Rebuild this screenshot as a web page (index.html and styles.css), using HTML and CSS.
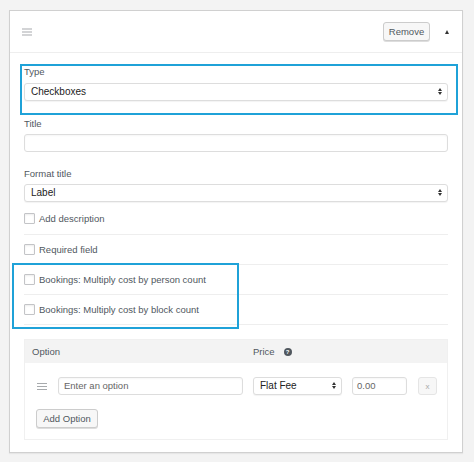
FILE: index.html
```html
<!DOCTYPE html>
<html lang="en">
  <head>
    <meta charset="UTF-8" />
    <meta name="viewport" content="width=device-width, initial-scale=1.0" />
    <title>Add-on Field</title>
    <link rel="stylesheet" href="styles.css">
  </head>
  <body>
    <div class="panel">
      <div class="panel-header">
        <span class="handle">
          <svg width="10" height="8" viewBox="0 0 10 8"><path d="M0 1h10M0 4h10M0 7h10" stroke="#a7aaad" stroke-width="1.2"/></svg>
        </span>
        <div class="header-actions">
          <button class="btn remove">Remove</button>
          <span class="toggle"></span>
        </div>
      </div>

      <div class="panel-body">
        <div class="field highlight-wide">
          <label>Type</label>
          <div class="select">Checkboxes<span class="arrows"></span></div>
        </div>

        <div class="field title-field">
          <label>Title</label>
          <div class="text-input"></div>
        </div>

        <div class="field format-field">
          <label>Format title</label>
          <div class="select">Label<span class="arrows"></span></div>
        </div>

        <div class="check-row first">
          <span class="checkbox"></span>Add description
        </div>
        <div class="check-row">
          <span class="checkbox"></span>Required field
        </div>
        <div class="highlight-group">
          <div class="check-row">
            <span class="checkbox"></span>Bookings: Multiply cost by person count
          </div>
          <div class="check-row">
            <span class="checkbox"></span>Bookings: Multiply cost by block count
          </div>
        </div>

        <div class="options">
          <div class="options-head">
            <span class="col-option">Option</span>
            <span class="col-price">Price <span class="help">?</span></span>
          </div>
          <div class="options-body">
            <div class="option-row">
              <span class="handle small">
                <svg width="10" height="7" viewBox="0 0 10 7"><path d="M0 0.5h10M0 3.5h10M0 6.5h10" stroke="#a7aaad" stroke-width="1"/></svg>
              </span>
              <div class="text-input option-name">Enter an option</div>
              <div class="select price-type">Flat Fee<span class="arrows"></span></div>
              <div class="text-input price">0.00</div>
              <button class="btn remove-option">x</button>
            </div>
            <button class="btn add-option">Add Option</button>
          </div>
        </div>
      </div>
    </div>
  </body>
</html>
```

FILE: styles.css
```css
* {
  box-sizing: border-box;
}

body {
  margin: 0;
  padding: 10px 11px 10px 9px;
  background-color: #f3f3f3;
  font-family: "Liberation Sans", Arial, sans-serif;
  font-size: 9.5px;
  color: #50575e;
}

.panel {
  background-color: #fff;
  border: 1px solid #d0d0d0;
  box-shadow: 0 1px 1px rgba(0, 0, 0, 0.05);
}

.panel-header {
  display: flex;
  align-items: center;
  justify-content: space-between;
  height: 42px;
  padding: 0 13px 0 12px;
  border-bottom: 1px solid #eee;
}

.handle {
  display: flex;
  align-items: center;
}

.header-actions {
  display: flex;
  align-items: center;
  gap: 15px;
}

.btn {
  font-family: inherit;
  font-size: 9.5px;
  color: #50575e;
  background-color: #f7f7f7;
  border: 1px solid #ccc;
  border-radius: 3px;
  box-shadow: 0 1px 0 #ddd;
  padding: 0;
  height: 19px;
  cursor: pointer;
}

.remove {
  width: 47px;
}

.toggle {
  width: 0;
  height: 0;
  border-left: 2.5px solid transparent;
  border-right: 2.5px solid transparent;
  border-bottom: 4px solid #333;
}

.panel-body {
  padding: 11px 14px 12px 14px;
}

.field {
  display: flex;
  flex-direction: column;
}

.field label {
  line-height: 12px;
  margin-bottom: 4px;
}

.highlight-wide {
  margin: 0 -10px 0 -4px;
  padding: 0 8px 12px 2px;
  border: 2px solid #1fa2d8;
}

.highlight-wide label {
  margin-bottom: 5px;
}

.title-field {
  margin-top: 3px;
}

.format-field {
  margin-top: 16px;
}

.select,
.text-input {
  position: relative;
  height: 18px;
  line-height: 16px;
  border: 1px solid #ddd;
  border-radius: 3px;
  background-color: #fff;
  box-shadow: inset 0 1px 2px rgba(0, 0, 0, 0.04);
}

.select {
  padding-left: 6px;
  font-size: 10px;
  color: #222;
  box-shadow: 0 1px 1px rgba(0, 0, 0, 0.05);
}

.arrows {
  position: absolute;
  right: 5px;
  top: 4px;
  width: 0;
  height: 0;
}

.arrows::before,
.arrows::after {
  content: "";
  position: absolute;
  right: 0;
  border-left: 2.5px solid transparent;
  border-right: 2.5px solid transparent;
}

.arrows::before {
  top: 0;
  border-bottom: 3px solid #333;
}

.arrows::after {
  top: 4px;
  border-top: 3px solid #333;
}

.check-row {
  display: flex;
  align-items: center;
  gap: 4px;
  height: 30px;
  border-bottom: 1px solid #eee;
  color: #50575e;
}

.check-row.first {
  height: 33px;
}

.checkbox {
  width: 11px;
  height: 11px;
  border: 1px solid #c3c4c7;
  border-radius: 1px;
  background-color: #fff;
  box-shadow: inset 0 1px 2px rgba(0, 0, 0, 0.08);
}

.highlight-group {
  position: relative;
}

.highlight-group::after {
  content: "";
  position: absolute;
  left: -12px;
  top: -2px;
  width: 223px;
  height: 62px;
  border: 2px solid #1fa2d8;
}

.options {
  margin-top: 14px;
  border: 1px solid #f0f0f0;
}

.options-head {
  display: flex;
  align-items: center;
  height: 23px;
  background-color: #f3f3f3;
  padding-left: 7px;
}

.col-option {
  width: 221px;
}

.col-price {
  display: flex;
  align-items: center;
  gap: 9px;
}

.help {
  display: inline-flex;
  align-items: center;
  justify-content: center;
  width: 8px;
  height: 8px;
  border-radius: 50%;
  background-color: #50575e;
  color: #fff;
  font-size: 6px;
  font-weight: bold;
}

.options-body {
  padding: 14px 0 11px 12px;
}

.option-row {
  display: flex;
  align-items: center;
  margin-bottom: 14px;
}

.handle.small {
  width: 10px;
  margin-right: 11px;
}

.option-name {
  width: 185px;
  padding-left: 5px;
  color: #666;
}

.price-type {
  width: 89px;
  margin-left: 10px;
}

.price {
  width: 55px;
  padding-left: 4px;
  margin-left: 10px;
  color: #666;
}

.remove-option {
  margin-left: 11px;
  width: 19px;
  height: 18px;
  color: #aaa;
  box-shadow: none;
  border-color: #e5e5e5;
  font-size: 8px;
}

.add-option {
  width: 62px;
  margin-left: -1px;
}
```
